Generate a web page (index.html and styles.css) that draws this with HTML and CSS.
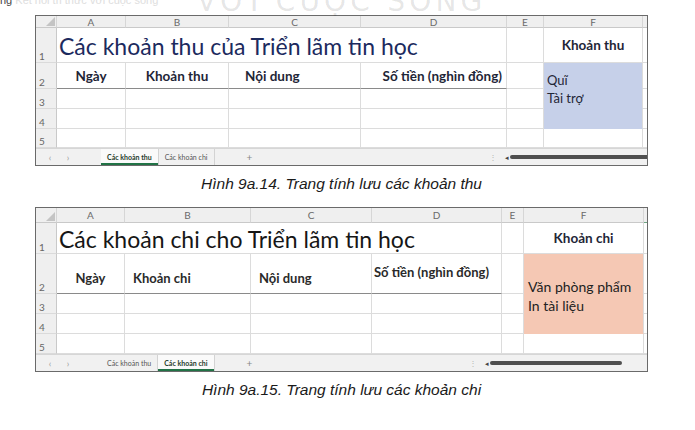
FILE: index.html
```html
<!DOCTYPE html>
<html lang="vi">
<head>
<meta charset="utf-8">
<title>Trang tính</title>
<link rel="stylesheet" href="styles.css">
</head>
<body>
<div class="page">
  <div class="topstrip">
    <span class="book">ng <span class="book-faint">Kết nối tri thức với cuộc sống</span></span>
    <span class="watermark">VỚI CUỘC SỐNG</span>
  </div>

  <figure class="fig fig1">
    <div class="sheet">
      <div class="grid g1">
        <div class="ch corner"><svg width="9" height="9" viewBox="0 0 9 9"><polygon points="9,0 9,9 0,9" fill="#c4c4c4"/></svg></div>
        <div class="ch">A</div><div class="ch">B</div><div class="ch">C</div><div class="ch">D</div><div class="ch">E</div><div class="ch">F</div><div class="ch last"></div>

        <div class="rh">1</div>
        <div class="c title t1">Các khoản thu của Triển lãm tin học</div>
        <div class="c"></div>
        <div class="c hd center">Khoản thu</div>
        <div class="c last"></div>

        <div class="rh">2</div>
        <div class="c hd center strong-b">Ngày</div>
        <div class="c hd center strong-b">Khoản thu</div>
        <div class="c hd pad16 strong-b">Nội dung</div>
        <div class="c hd right strong-b">Số tiền (nghìn đồng)</div>
        <div class="c"></div>
        <div class="c fill-blue item">Quĩ</div>
        <div class="c last"></div>

        <div class="rh">3</div>
        <div class="c"></div><div class="c"></div><div class="c"></div><div class="c"></div><div class="c"></div>
        <div class="c fill-blue item top">Tài trợ</div>
        <div class="c last"></div>

        <div class="rh">4</div>
        <div class="c"></div><div class="c"></div><div class="c"></div><div class="c"></div><div class="c"></div>
        <div class="c fill-blue"></div>
        <div class="c last"></div>

        <div class="rh">5</div>
        <div class="c"></div><div class="c"></div><div class="c"></div><div class="c"></div><div class="c"></div><div class="c"></div>
        <div class="c last"></div>
      </div>
      <div class="tabbar">
        <span class="nav">‹</span><span class="nav">›</span>
        <span class="tab active t1a">Các khoản thu</span>
        <span class="tab">Các khoản chi</span>
        <span class="plus">+</span>
        <span class="spacer"></span>
        <span class="dots">⋮</span>
        <span class="sarrow">◂</span>
        <span class="thumb thumb1"></span>
      </div>
    </div>
    <figcaption>Hình 9a.14. Trang tính lưu các khoản thu</figcaption>
  </figure>

  <figure class="fig fig2">
    <div class="sheet">
      <div class="grid g2">
        <div class="ch corner"><svg width="9" height="9" viewBox="0 0 9 9"><polygon points="9,0 9,9 0,9" fill="#c4c4c4"/></svg></div>
        <div class="ch">A</div><div class="ch">B</div><div class="ch">C</div><div class="ch">D</div><div class="ch">E</div><div class="ch">F</div><div class="ch last sel"></div>

        <div class="rh">1</div>
        <div class="c title t2">Các khoản chi cho Triển lãm tin học</div>
        <div class="c"></div>
        <div class="c hd center">Khoản chi</div>
        <div class="c last"></div>

        <div class="rh">2</div>
        <div class="c hd2 center low strong-b">Ngày</div>
        <div class="c hd2 low pad8 strong-b">Khoản chi</div>
        <div class="c hd2 low pad8 strong-b">Nội dung</div>
        <div class="c hd2 mid pad4 strong-b">Số tiền (nghìn đồng)</div>
        <div class="c"></div>
        <div class="c fill-salmon item2">Văn phòng phẩm</div>
        <div class="c last"></div>

        <div class="rh">3</div>
        <div class="c"></div><div class="c"></div><div class="c"></div><div class="c"></div><div class="c"></div>
        <div class="c fill-salmon item2 top">In tài liệu</div>
        <div class="c last"></div>

        <div class="rh">4</div>
        <div class="c"></div><div class="c"></div><div class="c"></div><div class="c"></div><div class="c"></div>
        <div class="c fill-salmon"></div>
        <div class="c last"></div>

        <div class="rh">5</div>
        <div class="c"></div><div class="c"></div><div class="c"></div><div class="c"></div><div class="c"></div><div class="c"></div>
        <div class="c last"></div>
      </div>
      <div class="tabbar">
        <span class="nav">‹</span><span class="nav">›</span>
        <span class="tab t2a">Các khoản thu</span>
        <span class="tab active">Các khoản chi</span>
        <span class="plus">+</span>
        <span class="spacer"></span>
        <span class="dots">⋮</span>
        <span class="sarrow">◂</span>
        <span class="thumb thumb2"></span>
        <span class="tail"></span>
      </div>
    </div>
    <figcaption>Hình 9a.15. Trang tính lưu các khoản chi</figcaption>
  </figure>
</div>
</body>
</html>
```

FILE: styles.css
```css
* { box-sizing: border-box; }
html, body { margin: 0; padding: 0; background: #ffffff; }
body { width: 695px; height: 430px; overflow: hidden; font-family: Lato, "Open Sans", sans-serif; }

.page { display: flex; flex-direction: column; }

.topstrip {
  height: 15px;
  display: flex;
  align-items: flex-start;
  white-space: nowrap;
}
.book {
  margin-top: -6px;
  font-family: "Liberation Sans", sans-serif;
  font-size: 11px;
  line-height: 12px;
  color: #444;
  width: 197px;
  overflow: hidden;
}
.book-faint { color: #dedede; }
.watermark {
  position: relative;
  z-index: 2;
  margin-top: -14px;
  font-family: "DejaVu Sans", sans-serif;
  font-size: 28px;
  line-height: 32px;
  letter-spacing: 4.2px;
  color: rgba(0, 0, 0, 0.11);
}

.fig { margin: 0 0 0 35px; width: 613px; }
.fig1 { margin-top: 0; }
.fig2 { margin-top: 14px; }

figcaption {
  margin-top: 9px;
  text-align: center;
  font-family: "Liberation Sans", Arial, sans-serif;
  font-style: italic;
  font-size: 15.5px;
  line-height: 18px;
  color: #1a1a1a;
}

.sheet {
  width: 613px;
  border: 1px solid #6a6a6a;
  background: #fff;
}

.grid { display: grid; }
.g1 {
  grid-template-columns: 21px 69px 103px 132px 146px 37px 99px 4px;
  grid-template-rows: 12px 35px 26px 20px 20px 19px;
}
.g2 {
  grid-template-columns: 21px 68px 126px 121px 130px 22px 120px 3px;
  grid-template-rows: 15px 31px 40px 20px 20px 20px;
}

.ch {
  background: #efefef;
  border-right: 1px solid #d6d6d6;
  border-bottom: 1px solid #c9c9c9;
  color: #6a6a6a;
  font-size: 10px;
  display: flex;
  align-items: center;
  justify-content: center;
}
.ch.corner { justify-content: flex-end; align-items: flex-end; padding: 0 1px 1px 0; }
.ch.last { border-right: none; }
.ch.sel { border-bottom: 1px solid #6fa584; }

.rh {
  background: #efefef;
  border-right: 1px solid #c9c9c9;
  border-bottom: 1px solid #dadada;
  color: #666;
  font-size: 10px;
  line-height: 10px;
  display: flex;
  align-items: flex-end;
  padding: 0 0 1px 3px;
}

.c {
  border-right: 1px solid #dcdcdc;
  border-bottom: 1px solid #dcdcdc;
  display: flex;
  align-items: center;
  white-space: nowrap;
  min-width: 0;
}
.c.last { border-right: none; }

.title {
  grid-column: span 4;
  font-size: 23px;
  padding-left: 2px;
  padding-top: 2px;
}
.t1 { color: #1c2a5e; }
.t2 { color: #161616; padding-top: 1px; }

.hd { font-weight: bold; font-size: 13.5px; color: #1f2637; }
.hd2 { font-weight: bold; font-size: 13px; color: #2a2a2a; }
.center { justify-content: center; }
.right { justify-content: flex-end; padding-right: 4px; }
.pad16 { padding-left: 16px; }
.pad8 { padding-left: 8px; }
.pad4 { padding-left: 2px; }
.low { align-items: flex-end; padding-bottom: 7px; }
.mid { align-items: center; padding-bottom: 4px; }
.strong-b { border-bottom: 1px solid #8a8a8a; }

.fill-blue { background: #c6d0e9; border-bottom-color: #c6d0e9; }
.fill-salmon { background: #f5c8b4; border-bottom-color: #f5c8b4; }
.item { font-size: 13px; color: #1f2637; padding-left: 3px; align-items: flex-end; padding-bottom: 0; }
.item2 { font-size: 14px; color: #222; padding-left: 4px; align-items: flex-end; padding-bottom: 0; margin-bottom: -2px; }
.item.top { align-items: flex-start; padding-top: 1px; }
.item2.top { align-items: flex-start; padding-top: 3px; }

.tabbar {
  height: 17px;
  background: #f1f1f1;
  border-top: 1px solid #d6d6d6;
  display: flex;
  align-items: center;
  font-size: 7px;
  color: #555;
  white-space: nowrap;
}
.nav { color: #9a9a9a; font-size: 9px; width: 18px; text-align: center; }
.nav:first-child { margin-left: 5px; }
.tab {
  height: 100%;
  display: flex;
  align-items: center;
  padding: 0 6px;
  border-right: 1px solid #d3d3d3;
}
.tab.active {
  background: #fafafa;
  color: #1f3a2a;
  font-weight: bold;
  box-shadow: inset 0 -2px 0 #217346;
}
.t1a { margin-left: 24px; }
.t2a { margin-left: 24px; }
.plus { margin-left: 32px; font-size: 10px; color: #888; }
.spacer { flex: 1; }
.dots { color: #b5b5b5; font-size: 8px; margin-right: 8px; }
.sarrow { color: #444; font-size: 7px; margin-right: 1px; }
.thumb {
  height: 4px;
  background: #4f4f4f;
  border-radius: 2px;
}
.thumb1 { width: 137px; border-radius: 2px 0 0 2px; }
.thumb2 { width: 132px; }
.tail { width: 25px; }
```
